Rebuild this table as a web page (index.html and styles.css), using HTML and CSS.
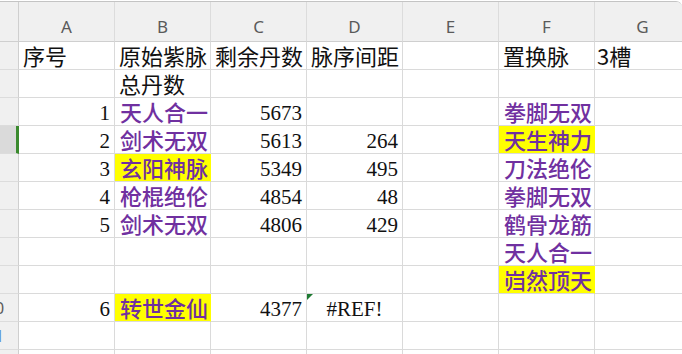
FILE: index.html
```html
<!DOCTYPE html>
<html lang="zh-CN">
<head>
<meta charset="utf-8">
<title>Sheet</title>
<link rel="stylesheet" href="styles.css">
</head>
<body>
<div class="frame">
  <div class="sheet">
    <div class="h corner"></div>
    <div class="h">A</div><div class="h">B</div><div class="h">C</div><div class="h">D</div><div class="h">E</div><div class="h">F</div><div class="h">G</div>

    <div class="rh"><span>1</span></div>
    <div class="c">序号</div><div class="c">原始紫脉</div><div class="c">剩余丹数</div><div class="c">脉序间距</div><div class="c"></div><div class="c">置换脉</div><div class="c g">3槽</div>

    <div class="rh"><span>2</span></div>
    <div class="c"></div><div class="c">总丹数</div><div class="c"></div><div class="c"></div><div class="c"></div><div class="c"></div><div class="c"></div>

    <div class="rh"><span>3</span></div>
    <div class="c n">1</div><div class="c p">天人合一</div><div class="c n">5673</div><div class="c"></div><div class="c"></div><div class="c p">拳脚无双</div><div class="c"></div>

    <div class="rh active"><span>4</span></div>
    <div class="c n">2</div><div class="c p">剑术无双</div><div class="c n">5613</div><div class="c n">264</div><div class="c"></div><div class="c p y">天生神力</div><div class="c"></div>

    <div class="rh"><span>5</span></div>
    <div class="c n">3</div><div class="c p y">玄阳神脉</div><div class="c n">5349</div><div class="c n">495</div><div class="c"></div><div class="c p">刀法绝伦</div><div class="c"></div>

    <div class="rh"><span>6</span></div>
    <div class="c n">4</div><div class="c p">枪棍绝伦</div><div class="c n">4854</div><div class="c n">48</div><div class="c"></div><div class="c p">拳脚无双</div><div class="c"></div>

    <div class="rh"><span>7</span></div>
    <div class="c n">5</div><div class="c p">剑术无双</div><div class="c n">4806</div><div class="c n">429</div><div class="c"></div><div class="c p">鹤骨龙筋</div><div class="c"></div>

    <div class="rh"><span>8</span></div>
    <div class="c"></div><div class="c"></div><div class="c"></div><div class="c"></div><div class="c"></div><div class="c p">天人合一</div><div class="c"></div>

    <div class="rh"><span>9</span></div>
    <div class="c"></div><div class="c"></div><div class="c"></div><div class="c"></div><div class="c"></div><div class="c p y">岿然顶天</div><div class="c"></div>

    <div class="rh"><span>10</span></div>
    <div class="c n">6</div><div class="c p y">转世金仙</div><div class="c n">4377</div><div class="c ctr err">#REF!</div><div class="c"></div><div class="c"></div><div class="c"></div>

    <div class="rh blue"><span>11</span></div>
    <div class="c"></div><div class="c"></div><div class="c"></div><div class="c"></div><div class="c"></div><div class="c"></div><div class="c"></div>

    <div class="rh"><span>12</span></div>
    <div class="c"></div><div class="c"></div><div class="c"></div><div class="c"></div><div class="c"></div><div class="c"></div><div class="c"></div>
  </div>
</div>
</body>
</html>
```
FILE: styles.css
```css
* { box-sizing: border-box; }
html, body { margin: 0; padding: 0; background: #ffffff; }
body { width: 682px; height: 354px; overflow: hidden; }

.frame {
  margin-top: 1px;
  width: 682px;
  height: 353px;
  border-top: 1px solid #c4c4c4;
  border-top-right-radius: 6px;
  overflow: hidden;
  background: #f0f0f0;
}

.sheet {
  display: grid;
  grid-template-columns: 19px repeat(7, 96px);
  grid-template-rows: 40px repeat(12, 28px);
  width: 691px;
  font-family: "Noto Sans CJK SC", "Noto Sans", sans-serif;
}

.h {
  background: #f0f0f0;
  border-bottom: 1px solid #cfcfcf;
  border-right: 1px solid #dcdcdc;
  color: #5a5a5a;
  font-family: "Noto Sans", "Liberation Sans", sans-serif;
  font-size: 17px;
  display: flex;
  align-items: center;
  justify-content: center;
  padding-top: 10px;
}
.h.corner { border-right: 1px solid #cfcfcf; }

.rh {
  background: #f0f0f0;
  border-right: 1px solid #cfcfcf;
  border-bottom: 1px solid #dcdcdc;
  overflow: hidden;
  color: #5a5a5a;
  font-family: "Noto Sans", "Liberation Sans", sans-serif;
  font-size: 16px;
  display: flex;
  align-items: center;
}
.rh span {
  display: block;
  flex: none;
  width: 30px;
  margin-left: -20px;
  text-align: center;
}
.rh.active {
  background: #dadada;
  border-right: 3px solid #3a8a2e;
}
.rh.blue { color: #5d8fd0; }

.c {
  position: relative;
  background: #ffffff;
  border-right: 1px solid #dadada;
  border-bottom: 1px solid #dadada;
  font-size: 22px;
  line-height: 27px;
  color: #111111;
  padding: 0 4px;
  white-space: nowrap;
}
.c.g { padding-left: 2px; }

.n {
  text-align: right;
  font-family: "Liberation Serif", serif;
  font-size: 21px;
  line-height: 30px;
  padding-right: 4px;
}

.p {
  color: #7030a0;
  font-weight: 500;
  padding-left: 5px;
}

.y {
  background: #ffff00;
  border-right-color: #ffff00;
}

.ctr { text-align: center; }

.err {
  font-family: "Liberation Serif", serif;
  font-size: 21px;
  line-height: 30px;
}
.err::before {
  content: "";
  position: absolute;
  left: 0;
  top: 0;
  border-top: 6px solid #1e7a32;
  border-right: 6px solid transparent;
}
```
